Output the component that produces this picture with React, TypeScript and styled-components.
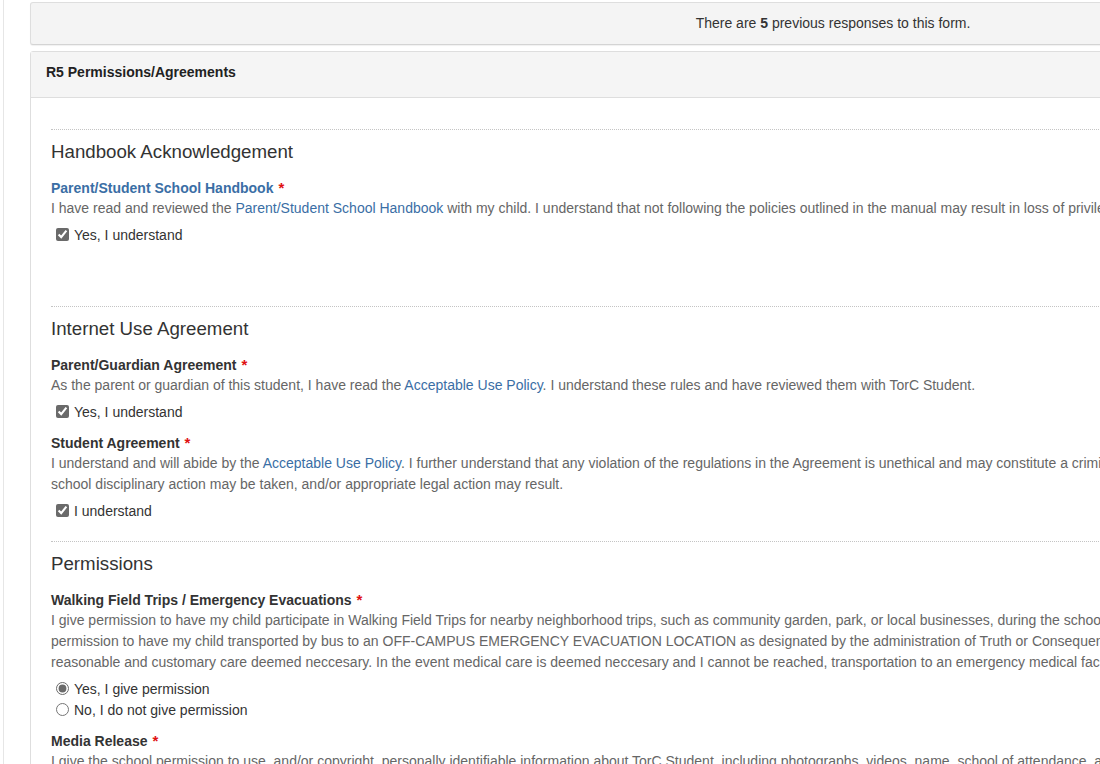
import React from "react";
import styled, { createGlobalStyle } from "styled-components";

const Global = createGlobalStyle`
  html, body { margin: 0; padding: 0; overflow: hidden; background: #fff; }
  body { font-family: "Liberation Sans", Arial, sans-serif; color: #333; font-size: 14px; }
  * { box-sizing: border-box; }
`;

const Page = styled.div`
  display: flex;
  min-height: 764px;
  width: 1700px;
`;

const SideRail = styled.div`
  width: 4px;
  flex: 0 0 4px;
  border-right: 1px solid #e6e6e6;
`;

const Main = styled.main`
  padding: 2px 0 0 26px;
  display: flex;
  flex-direction: column;
  gap: 6px;
`;

const NoticeBar = styled.div`
  width: 1606px;
  height: 43px;
  display: flex;
  align-items: center;
  justify-content: center;
  padding-bottom: 2px;
  background: #f4f4f4;
  border: 1px solid #dedede;
  border-bottom-color: #d4d4d4;
  border-radius: 3px;
  box-shadow: 0 1px 1px rgba(0, 0, 0, 0.06);
  font-size: 14px;
  color: #333;
`;

const Panel = styled.section`
  width: 1606px;
  border: 1px solid #dedede;
  border-radius: 3px;
  background: #fff;
`;

const PanelHeader = styled.div`
  background: #f5f5f5;
  border-bottom: 1px solid #dedede;
  padding: 10px 15px 15px;
  font-weight: bold;
  font-size: 14px;
  line-height: 20px;
  color: #222;
`;

const PanelBody = styled.div`
  padding: 31px 20px 0;
`;

const Divider = styled.hr`
  margin: 0;
  border: 0;
  border-top: 1px dotted #c4c4c4;
  height: 0;
`;

const SectionTitle = styled.h3`
  margin: 12px 0 0;
  font-size: 18.7px;
  line-height: 20px;
  font-weight: normal;
  color: #333;
`;

const FieldLabel = styled.div<{ $blue?: boolean; $gap: number }>`
  margin-top: ${(p) => p.$gap}px;
  font-weight: bold;
  font-size: 14px;
  line-height: 20px;
  color: ${(p) => (p.$blue ? "#3a6ea5" : "#333")};
`;

const Required = styled.span`
  color: #e01010;
  font-size: 15px;
  margin-left: 5px;
`;

const Description = styled.p`
  margin: 0;
  font-size: 14px;
  line-height: 21px;
  color: #666;
  white-space: nowrap;
`;

const DocLink = styled.a`
  color: #3a6ea5;
  text-decoration: none;
`;

const Options = styled.div`
  margin-top: 5px;
  display: flex;
  flex-direction: column;
`;

const Option = styled.label`
  display: flex;
  align-items: center;
  gap: 5px;
  padding-left: 5px;
  height: 21px;
  font-size: 14px;
  color: #333;
`;

const Check = styled.input`
  margin: 0;
  width: 13px;
  height: 13px;
  accent-color: #6a6a6a;
`;

const Spacer = styled.div<{ $h: number }>`
  height: ${(p) => p.$h}px;
`;

export default function App() {
  return (
    <>
      <Global />
      <Page>
        <SideRail />
        <Main>
          <NoticeBar>
            <span>
              There are <b>5</b> previous responses to this form.
            </span>
          </NoticeBar>
          <Panel>
            <PanelHeader>R5 Permissions/Agreements</PanelHeader>
            <PanelBody>
              <Divider />
              <SectionTitle>Handbook Acknowledgement</SectionTitle>
              <FieldLabel $blue $gap={16}>
                Parent/Student School Handbook<Required>*</Required>
              </FieldLabel>
              <Description>
                I have read and reviewed the <DocLink href="#">Parent/Student School Handbook</DocLink> with my
                child. I understand that not following the policies outlined in the manual may result in loss of
                privileges and/or disciplinary action.
              </Description>
              <Options>
                <Option>
                  <Check type="checkbox" defaultChecked />
                  Yes, I understand
                </Option>
              </Options>
              <Spacer $h={61} />

              <Divider />
              <SectionTitle>Internet Use Agreement</SectionTitle>
              <FieldLabel $gap={16}>
                Parent/Guardian Agreement<Required>*</Required>
              </FieldLabel>
              <Description>
                As the parent or guardian of this student, I have read the{" "}
                <DocLink href="#">Acceptable Use Policy</DocLink>. I understand these rules and have reviewed them
                with TorC Student.
              </Description>
              <Options>
                <Option>
                  <Check type="checkbox" defaultChecked />
                  Yes, I understand
                </Option>
              </Options>
              <FieldLabel $gap={11}>
                Student Agreement<Required>*</Required>
              </FieldLabel>
              <Description>
                I understand and will abide by the <DocLink href="#">Acceptable Use Policy</DocLink>. I further
                understand that any violation of the regulations in the Agreement is unethical and may constitute a
                criminal offense. Should I commit any violation, my access privileges may be revoked,
                <br />
                school disciplinary action may be taken, and/or appropriate legal action may result.
              </Description>
              <Options>
                <Option>
                  <Check type="checkbox" defaultChecked />I understand
                </Option>
              </Options>
              <Spacer $h={20} />

              <Divider />
              <SectionTitle>Permissions</SectionTitle>
              <FieldLabel $gap={16}>
                Walking Field Trips / Emergency Evacuations<Required>*</Required>
              </FieldLabel>
              <Description>
                I give permission to have my child participate in Walking Field Trips for nearby neighborhood trips,
                such as community garden, park, or local businesses, during the school year. I also give
                <br />
                permission to have my child transported by bus to an OFF-CAMPUS EMERGENCY EVACUATION LOCATION as
                designated by the administration of Truth or Consequences Municipal Schools and authorize
                <br />
                reasonable and customary care deemed neccesary. In the event medical care is deemed neccesary and I
                cannot be reached, transportation to an emergency medical facility will be provided.
              </Description>
              <Options>
                <Option>
                  <Check type="radio" name="walking" defaultChecked />
                  Yes, I give permission
                </Option>
                <Option>
                  <Check type="radio" name="walking" />
                  No, I do not give permission
                </Option>
              </Options>
              <FieldLabel $gap={11}>
                Media Release<Required>*</Required>
              </FieldLabel>
              <Description>
                I give the school permission to use, and/or copyright, personally identifiable information about
                TorC Student, including photographs, videos, name, school of attendance, and grade level.
              </Description>
            </PanelBody>
          </Panel>
        </Main>
      </Page>
    </>
  );
}
